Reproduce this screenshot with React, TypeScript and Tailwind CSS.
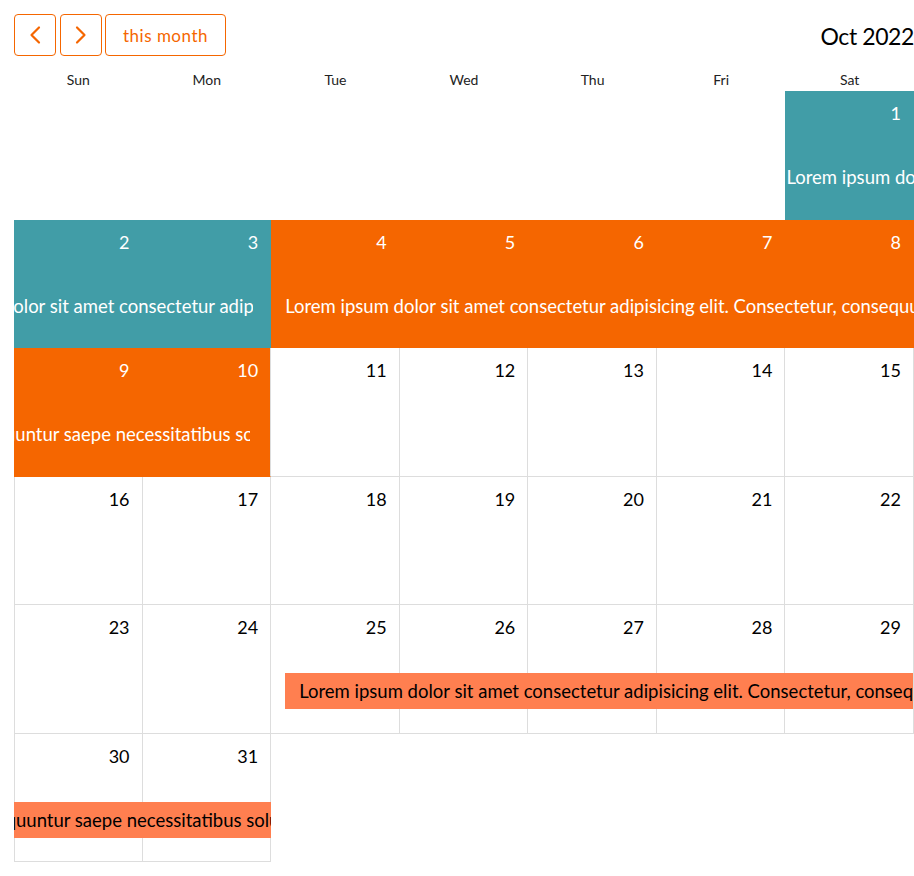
import type React from "react";

const ORANGE = "#f56600";
const COL = 900 / 7;

const EVENT_A = "Lorem ipsum dolor sit amet consectetur adipisicing elit. Consectetur, consequuntur saepe necessitatibus soluta";

type Cell = { day: number; color?: "teal" | "orange" } | null;

type Segment = {
  left: number;
  width: number;
  textLeft: number;
  bar?: boolean;
  tone: "light" | "dark";
};

const weeks: { cells: Cell[]; segments: Segment[] }[] = [
  {
    cells: [null, null, null, null, null, null, { day: 1, color: "teal" }],
    segments: [{ left: COL * 6, width: COL, textLeft: 1, tone: "light" }],
  },
  {
    cells: [
      { day: 2, color: "teal" },
      { day: 3, color: "teal" },
      { day: 4, color: "orange" },
      { day: 5, color: "orange" },
      { day: 6, color: "orange" },
      { day: 7, color: "orange" },
      { day: 8, color: "orange" },
    ],
    segments: [
      { left: 0, width: COL * 2 - 18, textLeft: 1 - COL + 8, tone: "light" },
      { left: COL * 2 + 14, width: 900 - COL * 2 - 14, textLeft: 0, tone: "light" },
    ],
  },
  {
    cells: [
      { day: 9, color: "orange" },
      { day: 10, color: "orange" },
      { day: 11 },
      { day: 12 },
      { day: 13 },
      { day: 14 },
      { day: 15 },
    ],
    segments: [{ left: 0, width: 236, textLeft: -(900 - COL * 2 - 14) + 6, tone: "light" }],
  },
  {
    cells: [16, 17, 18, 19, 20, 21, 22].map((d) => ({ day: d })),
    segments: [],
  },
  {
    cells: [23, 24, 25, 26, 27, 28, 29].map((d) => ({ day: d })),
    segments: [
      { left: COL * 2 + 14, width: 900 - COL * 2 - 15, textLeft: 14, bar: true, tone: "dark" },
    ],
  },
  {
    cells: [{ day: 30 }, { day: 31 }, null, null, null, null, null],
    segments: [
      { left: 0, width: COL * 2, textLeft: 14 - (900 - COL * 2 - 15) + 2, bar: true, tone: "dark" },
    ],
  },
];

const ChevronLeft = () => (
  <svg width="14" height="20" viewBox="0 0 14 20" fill="none">
    <path d="M11 2.5 L3.5 10 L11 17.5" stroke={ORANGE} strokeWidth="2.2" strokeLinecap="round" strokeLinejoin="round" />
  </svg>
);

const ChevronRight = () => (
  <svg width="14" height="20" viewBox="0 0 14 20" fill="none">
    <path d="M3 2.5 L10.5 10 L3 17.5" stroke={ORANGE} strokeWidth="2.2" strokeLinecap="round" strokeLinejoin="round" />
  </svg>
);

const DayCell: React.FC<{ cell: Cell; col: number }> = ({ cell, col }) => {
  if (!cell) return <div />;
  const bg =
    cell.color === "teal"
      ? "bg-[#419da7] border-[#419da7] text-white"
      : cell.color === "orange"
        ? "bg-[#f56600] border-[#f56600] text-white"
        : "bg-white border-[#dddddd] text-black";
  const leftBorder = col === 0 ? "border-l" : "";
  const rightBorderGray = cell.color && cell.day === 10 ? "border-r-[#dddddd]" : "";
  return (
    <div className={`border-r border-b ${leftBorder} ${bg} ${rightBorderGray} pt-[10px] pr-[12px] text-right text-[18px] leading-[24px]`}>
      {cell.day}
    </div>
  );
};

export default function App() {
  return (
    <div className="w-[914px] overflow-hidden bg-white pl-[14px] pt-[14px] font-['Lato','Liberation_Sans',sans-serif]">
      <div className="flex h-[42px] items-center justify-between">
        <div className="flex gap-1">
          <button type="button" className="flex h-[42px] w-[42px] items-center justify-center rounded border border-[#f56600]">
            <ChevronLeft />
          </button>
          <button type="button" className="flex h-[42px] w-[42px] items-center justify-center rounded border border-[#f56600]">
            <ChevronRight />
          </button>
          <button
            type="button"
            className="h-[42px] w-[121px] -ml-px rounded border border-[#f56600] pt-[2px] text-[17px] tracking-[0.5px] text-[#f56600]"
          >
            this month
          </button>
        </div>
        <div className="pt-[2px] text-[23px] tracking-[-0.4px] text-black">Oct 2022</div>
      </div>

      <div className="mt-[14px] grid w-[900px] grid-cols-7 pb-[1px]">
        {["Sun", "Mon", "Tue", "Wed", "Thu", "Fri", "Sat"].map((d) => (
          <div key={d} className="text-center text-[14px] leading-[20px] text-[#222]">
            {d}
          </div>
        ))}
      </div>

      <div className="w-[900px]">
        {weeks.map((week, wi) => (
          <div key={wi} className="relative h-[128.57px]">
            <div className="grid h-full grid-cols-7">
              {week.cells.map((c, ci) => (
                <DayCell key={ci} cell={c} col={ci} />
              ))}
            </div>
            {week.segments.map((s, si) => (
              <div
                key={si}
                className={`absolute top-[68px] h-[36px] overflow-hidden ${s.bar ? "bg-[#ff7f50]" : ""}`}
                style={{ left: s.left, width: s.width }}
              >
                <span
                  className={`absolute top-0 whitespace-nowrap text-[18.5px] leading-[36px] ${s.tone === "light" ? "text-white" : "text-black"}`}
                  style={{ left: s.textLeft }}
                >
                  {EVENT_A}
                </span>
              </div>
            ))}
          </div>
        ))}
      </div>
    </div>
  );
}
